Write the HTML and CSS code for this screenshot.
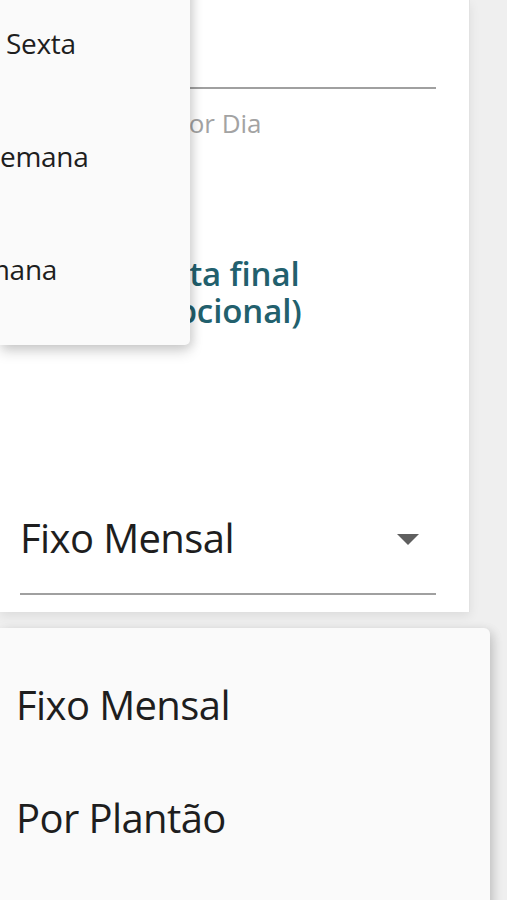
FILE: index.html
```html
<!DOCTYPE html>
<html lang="pt-BR">
<head>
<meta charset="utf-8">
<title>Formulário</title>
<link rel="stylesheet" href="styles.css">
</head>
<body>
<div class="screen">
  <div class="card">
    <div class="field field-top"></div>
    <div class="helper">Por Dia</div>
    <div class="date-label">Data final (opcional)</div>
    <div class="field select">
      <span class="select-value">Fixo Mensal</span>
      <svg class="caret" viewBox="7 10 10 5" width="22" height="11" aria-hidden="true"><path d="M7 10l5 5 5-5z" fill="#5f5f5f"/></svg>
    </div>
  </div>

  <div class="menu menu-top">
    <div class="menu-item item-a">Sexta</div>
    <div class="menu-item item-b">emana</div>
    <div class="menu-item item-c">mana</div>
  </div>

  <div class="menu menu-bottom">
    <div class="menu-item">Fixo Mensal</div>
    <div class="menu-item">Por Plantão</div>
  </div>
</div>
</body>
</html>
```

FILE: styles.css
```css
* { box-sizing: border-box; }
html, body { margin: 0; padding: 0; }
body {
  background: #efefef;
  font-family: "Open Sans", "Noto Sans", sans-serif;
  color: #212121;
}
.screen {
  position: relative;
  width: 507px;
  height: 900px;
  overflow: hidden;
  background: #efefef;
}
.card {
  width: 470px;
  background: #ffffff;
  border-right: 1px solid #e2e2e2;
  display: flex;
  flex-direction: column;
  padding-bottom: 17px;
  box-shadow: 0 4px 10px rgba(0,0,0,0.08);
}
.field {
  margin: 0 0 0 20px;
  width: 416px;
  border-bottom: 2px solid #a0a0a0;
}
.field-top {
  height: 89px;
}
.helper {
  margin-top: 21px;
  padding-left: 173px;
  font-size: 26px;
  line-height: 26px;
  color: #a3a3a3;
}
.date-label {
  margin-top: 119px;
  margin-left: 146px;
  width: 200px;
  font-size: 33px;
  line-height: 37px;
  font-weight: 600;
  letter-spacing: -0.1px;
  color: #22606d;
}
.select {
  margin-top: 189px;
  display: flex;
  align-items: center;
  justify-content: space-between;
  padding: 0 17px 35px 0;
}
.select-value {
  font-size: 40px;
  line-height: 40px;
  letter-spacing: -0.6px;
  color: #1e1e1e;
}
.caret {
  margin-top: 3px;
  display: block;
}
.menu {
  position: absolute;
  left: 0;
  background: #fafafa;
  box-shadow: 0 6px 14px rgba(0,0,0,0.18), 4px 2px 10px rgba(0,0,0,0.08);
  padding: 20px 0;
}
.menu-top {
  top: -34px;
  width: 190px;
  border-bottom-right-radius: 5px;
}
.menu-item {
  height: 113px;
  display: flex;
  align-items: center;
  padding-left: 16px;
  font-size: 40px;
  letter-spacing: -0.6px;
  color: #1e1e1e;
}
.menu-top .menu-item {
  font-size: 28px;
  letter-spacing: -0.3px;
}
.menu-top .item-a { padding-left: 6px; }
.menu-top .item-b { padding-left: 0; }
.menu-top .item-c { padding-left: 0; margin-left: -16px; }
.menu-bottom {
  top: 628px;
  width: 490px;
  height: 300px;
  border-top-right-radius: 6px;
}
```
